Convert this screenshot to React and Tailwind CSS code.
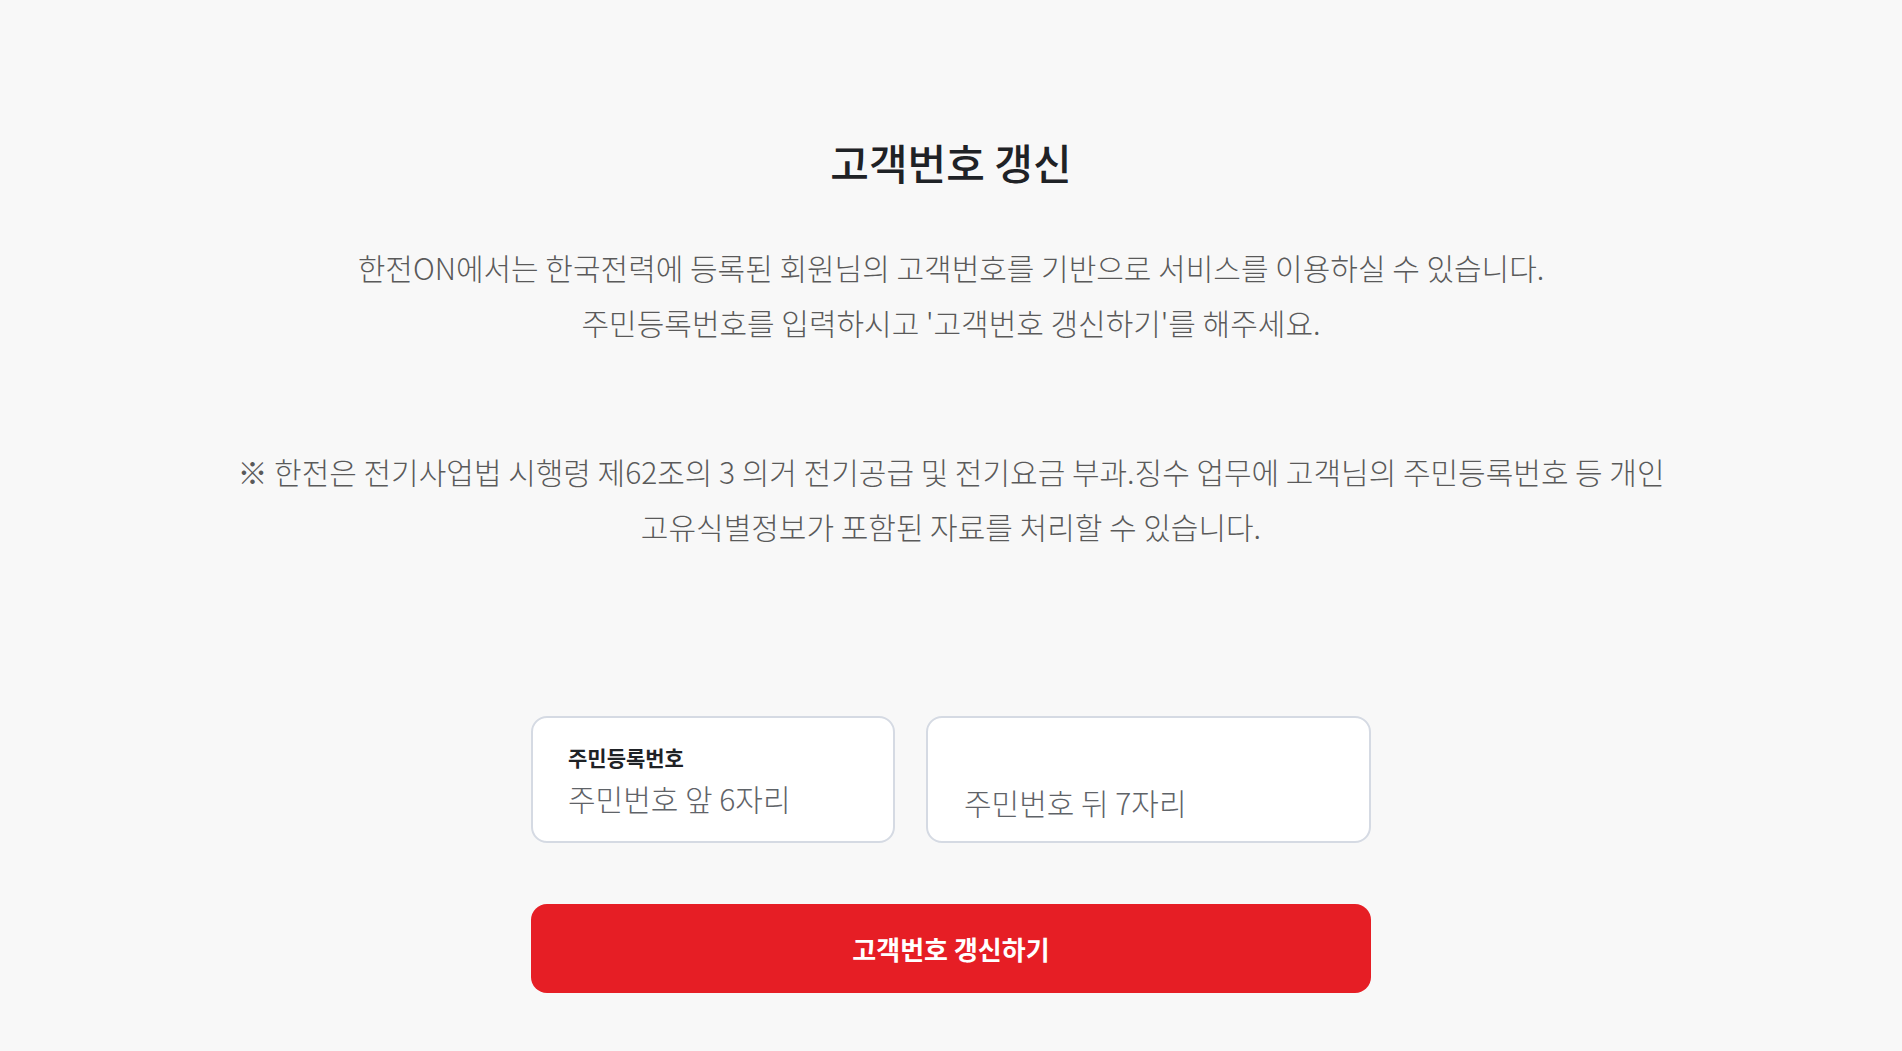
import React from 'react';

const font = { fontFamily: '"Noto Sans CJK KR", "Noto Sans", sans-serif' };

const App = () => {
  return (
    <div className="min-h-screen bg-[#f8f8f8]" style={font}>
      <div className="flex flex-col items-center pt-[136px]">
        <h1 className="text-[42px] leading-[52px] font-medium text-[#1f2226]">
          고객번호 갱신
        </h1>

        <div className="mt-[52px] text-center text-[30px] leading-[55px] text-[#5a5a5a] font-light">
          <p>한전ON에서는 한국전력에 등록된 회원님의 고객번호를 기반으로 서비스를 이용하실 수 있습니다.</p>
          <p>주민등록번호를 입력하시고 '고객번호 갱신하기'를 해주세요.</p>
        </div>

        <div className="mt-[94px] text-center text-[30px] leading-[55px] text-[#5a5a5a] font-light">
          <p>※ 한전은 전기사업법 시행령 제62조의 3 의거 전기공급 및 전기요금 부과.징수 업무에 고객님의 주민등록번호 등 개인</p>
          <p>고유식별정보가 포함된 자료를 처리할 수 있습니다.</p>
        </div>

        <div className="mt-[162px] w-[840px]">
          <div className="flex gap-[31px]">
            <div className="w-[364px] h-[127px] rounded-[16px] border-2 border-[#d5dae3] bg-white pl-[35px] pt-[26px]">
              <div className="text-[21px] leading-[26px] font-bold text-[#1f2226]">주민등록번호</div>
              <input
                type="text"
                placeholder="주민번호 앞 6자리"
                className="mt-[9px] h-[38px] w-full text-[30px] text-[#555] placeholder:text-[#5f6368] outline-none bg-transparent font-light"
              />
            </div>
            <div className="flex-1 h-[127px] rounded-[16px] border-2 border-[#d5dae3] bg-white pl-[36px] pt-[65px]">
              <input
                type="password"
                placeholder="주민번호 뒤 7자리"
                className="h-[38px] w-full text-[30px] text-[#555] placeholder:text-[#5f6368] outline-none bg-transparent font-light"
              />
            </div>
          </div>

          <button className="mt-[61px] w-full h-[89px] rounded-[16px] bg-[#e61e25] text-white text-[26px] font-bold">
            고객번호 갱신하기
          </button>
        </div>
      </div>
    </div>
  );
};

export default App;
